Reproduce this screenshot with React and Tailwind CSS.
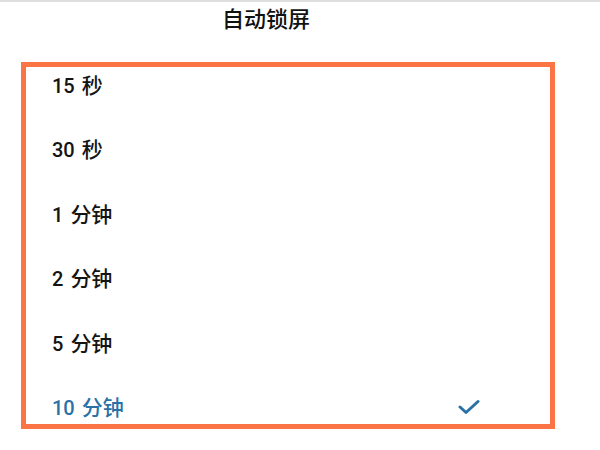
import React from "react";

const items = [
  ["15", "秒"],
  ["30", "秒"],
  ["1", "分钟"],
  ["2", "分钟"],
  ["5", "分钟"],
  ["10", "分钟"],
];

export default function App() {
  return (
    <div
      className="w-[600px] h-[450px] bg-white overflow-hidden flex flex-col"
      style={{ fontFamily: 'Roboto, "Noto Sans CJK SC", "Noto Sans", sans-serif' }}
    >
      <div className="h-[2px] bg-[#dedede] w-full" />
      <div className="h-[60px] flex">
        <div className="ml-[222px] text-[22px] leading-[30px] mt-[3px] font-medium text-[#111]">自动锁屏</div>
      </div>
      <div className="ml-[21px] w-[534px] h-[367px] border-[5px] border-[#fb7446] flex flex-col pt-[9px] pl-[26px] pr-[70px] gap-[44.4px]">
        {items.map(([n, u], i) => {
          const sel = i === items.length - 1;
          return (
            <div
              key={n}
              className={`h-[20px] flex items-center justify-between text-[20px] leading-[20px] font-medium ${
                sel ? "text-[#2a72a6]" : "text-[#141414]"
              }`}
            >
              <span className="flex items-center gap-[7px]">
                <span>{n}</span>
                <span className="text-[21px]">{u}</span>
              </span>
              {sel && (
                <svg width="22" height="16" viewBox="0 0 22 16" className="-mt-[1px]">
                  <path
                    d="M2 8 L8 13.5 L20 2.5"
                    fill="none"
                    stroke="#2a72a6"
                    strokeWidth="3"
                    strokeLinecap="round"
                    strokeLinejoin="round"
                  />
                </svg>
              )}
            </div>
          );
        })}
      </div>
    </div>
  );
}
